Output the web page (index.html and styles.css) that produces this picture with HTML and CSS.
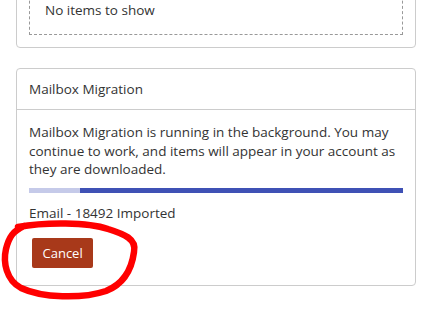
FILE: index.html
```html
<!DOCTYPE html>
<html lang="en">
<head>
<meta charset="utf-8">
<title>Mailbox Migration</title>
<link rel="stylesheet" href="styles.css">
</head>
<body>
<div class="page">
  <section class="card card-prev">
    <div class="empty">No items to show</div>
  </section>
  <section class="card">
    <div class="card-header">Mailbox Migration</div>
    <div class="card-body">
      <p class="msg">Mailbox Migration is running in the background. You may continue to work, and items will appear in your account as they are downloaded.</p>
      <div class="progress"><div class="progress-light" style="width:13.6%"></div></div>
      <p class="status">Email - 18492 Imported</p>
      <button class="btn-cancel" type="button">Cancel</button>
    </div>
  </section>
  <svg class="annot" width="439" height="331" viewBox="0 0 439 331" aria-hidden="true">
    <path d="M 18 227 C 45 222, 88 222, 108 229 C 124 234, 137 239, 134 252 C 132 267, 126 283, 106 291 C 82 299, 42 298, 21 288 C 6 280, 3 262, 6 249 C 9 237, 13 231, 24 226" fill="none" stroke="#ff0000" stroke-width="6.5" stroke-linecap="round" stroke-linejoin="round"/>
  </svg>
</div>
</body>
</html>
```
FILE: styles.css
```css
html, body {
  margin: 0;
  padding: 0;
  background: #fff;
}
body {
  font-family: "Open Sans", "Noto Sans", sans-serif;
  font-size: 13.5px;
  line-height: 18.67px;
  color: #333;
  overflow: hidden;
}
.page {
  position: relative;
  display: flow-root;
  padding-left: 16px;
  width: 400px;
  height: 331px;
}
.card {
  border: 1px solid #ccc;
  border-radius: 4px;
  background: #fff;
}
.card-prev {
  margin-top: -28px;
  padding: 12px;
  margin-bottom: 20px;
}
.empty {
  border: 1px dashed #999;
  padding: 14px 15px;
  line-height: 20px;
}
.card-header {
  padding: 10px 12px;
  line-height: 20px;
  border-bottom: 1px solid #ccc;
}
.card-body {
  padding: 13px 12px 17px 12px;
}
.msg, .status {
  margin: 0;
}
.progress {
  margin-top: 9px;
  height: 5px;
  background: #3f51b5;
  display: flex;
}
.progress-light {
  background: #c5cae9;
  height: 100%;
}
.status {
  margin-top: 11px;
}
.btn-cancel {
  display: block;
  margin: 15px 0 0 3px;
  height: 30px;
  padding: 0 10.5px;
  border: none;
  border-radius: 2px;
  background: #a8391a;
  color: #fff;
  font-family: inherit;
  font-size: 13px;
}
.annot {
  position: absolute;
  left: 0;
  top: 0;
  pointer-events: none;
}
```
